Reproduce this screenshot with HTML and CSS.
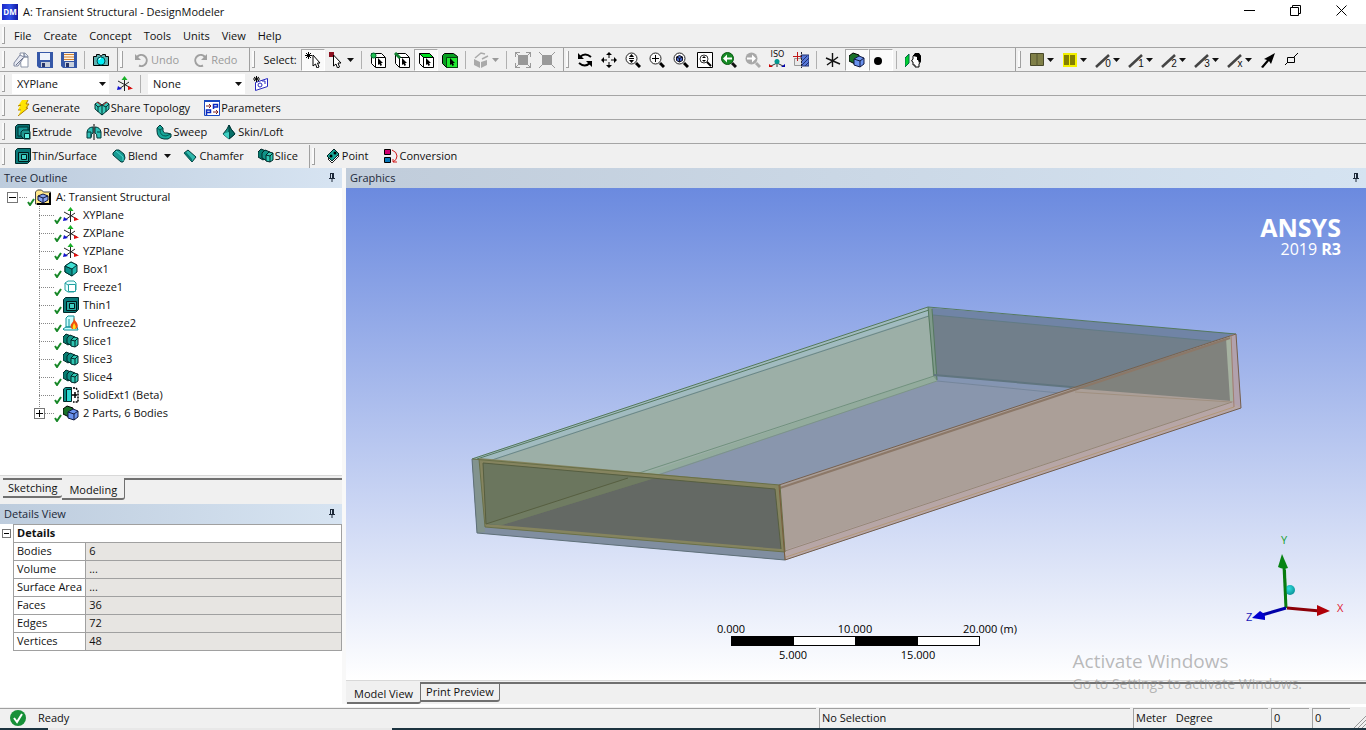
FILE: index.html
```html
<!DOCTYPE html>
<html lang="en">
<head>
<meta charset="utf-8">
<title>A: Transient Structural - DesignModeler</title>
<link rel="stylesheet" href="styles.css">
</head>
<body>
<svg class="defs" aria-hidden="true">
  <defs>
    <radialGradient id="ball" cx=".4" cy=".35" r=".7"><stop offset="0" stop-color="#2fe0e0"/><stop offset="1" stop-color="#0a8f95"/></radialGradient>
  </defs>
  <symbol id="sheet" viewBox="0 0 16 16"><path d="M7 1h5l3 3v11H8z" fill="#fff" stroke="#8d96a8"/><path d="M11 1v4h4" fill="#cfd8e8" stroke="#5d6880"/><path d="M1 11l6-8 4 2-6 9H1z" fill="#e6e9f2" stroke="#8088a0"/><path d="M3 13l7-7" stroke="#687088"/></symbol>
  <symbol id="disk" viewBox="0 0 16 16"><path d="M0 0h16v16H2l-2-2z" fill="#3658a8"/><path d="M3 1h10v7H3z" fill="#eef3fb"/><path d="M4 10h9v5H4z" fill="#c8d0dc"/><path d="M5 11h3v4H5z" fill="#26356b"/></symbol>
  <symbol id="disk-text" viewBox="0 0 16 16"><path d="M0 0h16v16H2l-2-2z" fill="#3658a8"/><path d="M3 1h10v8H3z" fill="#fff4e4"/><path d="M3 2.500h10M3 5h10M3 7.500h10" stroke="#d08030"/><path d="M4 10h9v5H4z" fill="#c8d0dc"/><path d="M5 11h3v4H5z" fill="#26356b"/></symbol>
  <symbol id="camera" viewBox="0 0 16 16"><path d="M.5 4.500h3v-2h3l1.500 2 1.500-2h3v2h3v9H.5z" fill="#60b0b0" stroke="#000"/><circle cx="8" cy="9" r="4" fill="#00f0f8" stroke="#005050"/><path d="M6 8a2 2 0 0 1 2-2" stroke="#fff" fill="none"/></symbol>
  <symbol id="undo" viewBox="0 0 16 16"><path d="M4 5a5.500 5.500 0 1 1 2 8.500" fill="none" stroke="#a0a0a0" stroke-width="2"/><path d="M2 2v6h6z" fill="#a0a0a0"/></symbol>
  <symbol id="redo" viewBox="0 0 16 16"><path d="M12 5a5.500 5.500 0 1 0-2 8.500" fill="none" stroke="#a0a0a0" stroke-width="2"/><path d="M14 2v6H8z" fill="#a0a0a0"/></symbol>
  <symbol id="pick" viewBox="0 0 16 16"><path d="M3.500 0v7M0 3.500h7M1 1l5 5M6 1L1 6" stroke="#000"/><path d="M8 3v11l2.500-2 1.500 4 2-1-1.500-4H15z" fill="#fff" stroke="#000"/></symbol>
  <symbol id="pick-mode" viewBox="0 0 16 16"><path d="M0 0h5v5H0z" fill="#8c1020"/><path d="M4.500 3v11l2.500-2 1.500 4 2-1-1.500-4H12z" fill="#fff" stroke="#000"/></symbol>
  <symbol id="cursor" viewBox="0 0 16 16"><path d="M8 6v7l1.500-1 1 2 1.500-1-1-2h2z" fill="#000"/></symbol>
  <symbol id="sel-point" viewBox="0 0 16 16"><path d="M1.500 1.500h10l4 4v10h-10l-4-4z" fill="#fff" stroke="#000"/><path d="M5.500 15V5.500H15" fill="none" stroke="#000"/><circle cx="3.500" cy="3.500" r="2.500" fill="#20c050" stroke="#063"/><use href="#cursor"/></symbol>
  <symbol id="sel-edge" viewBox="0 0 16 16"><path d="M1.500 1.500h10l4 4v10h-10l-4-4z" fill="#fff" stroke="#000"/><path d="M5.500 15V5.500H15" fill="none" stroke="#000"/><path d="M1 1l5 5" stroke="#108030" stroke-width="3"/><use href="#cursor"/></symbol>
  <symbol id="sel-face" viewBox="0 0 16 16"><path d="M1.500 1.500h10l4 4v10h-10l-4-4z" fill="#fff" stroke="#000"/><path d="M1.500 1.500h10l4 4h-10z" fill="#00e020" stroke="#000"/><path d="M5.500 5v10" stroke="#000"/><use href="#cursor"/></symbol>
  <symbol id="sel-body" viewBox="0 0 16 16"><path d="M.5 3.500l2-2h9l4 3v11h-11l-4-4z" fill="#08a020" stroke="#000"/><path d="M4.500 5.500h11v10h-11z" fill="#20e830" stroke="#064010"/><use href="#cursor"/></symbol>
  <symbol id="box-off" viewBox="0 0 16 16"><path d="M0 7l6 3v6l-6-3zM7 10l6-2v5l-6 3z" fill="#aaa"/><path d="M1 6l6-5 4 1M8 7l6-3" fill="none" stroke="#aaa" stroke-width="1.500"/></symbol>
  <symbol id="fit-off" viewBox="0 0 16 16"><path d="M3 3h10v10H3z" fill="#999"/><path d="M.5 5V.5H5M11 .5h4.500V5M15.500 11v4.500H11M5 15.500H.5V11M0 0l3 3M16 0l-3 3M0 16l3-3M16 16l-3-3" fill="none" stroke="#999"/></symbol>
  <symbol id="shrink-off" viewBox="0 0 16 16"><path d="M3 3h10v10H3z" fill="#999"/><path d="M0 0l4 4M16 0l-4 4M0 16l4-4M16 16l-4-4" stroke="#999"/></symbol>
  <symbol id="rotate" viewBox="0 0 16 16"><path d="M3 5q5-5 11 0M13 11q-5 5-11 0" fill="none" stroke="#000" stroke-width="2"/><path d="M1 1v6h6zM15 15V9H9z"/></symbol>
  <symbol id="pan" viewBox="0 0 16 16"><path d="M8 2v4M8 10v4M2 8h4M10 8h4" stroke="#000"/><path d="M8 0l3 3H5zM8 16l3-3H5zM0 8l3-3v6zM16 8l-3-3v6z"/></symbol>
  <symbol id="lens" viewBox="0 0 16 16"><circle cx="6.500" cy="6.500" r="5.500" fill="#fafafa" stroke="#222"/><path d="M11 11l4 4" stroke="#000" stroke-width="3"/></symbol>
  <symbol id="zoom" viewBox="0 0 16 16"><use href="#lens"/><path d="M6.500 2L9 5H4zM6.500 11L9 8H4zM4 6h5v1H4z"/></symbol>
  <symbol id="zoom-in" viewBox="0 0 16 16"><use href="#lens"/><path d="M3 6.500h7M6.500 3v7" stroke="#000"/></symbol>
  <symbol id="zoom-fit" viewBox="0 0 16 16"><use href="#lens"/><path d="M3.500 5l3-1.500 3 1.500v3.500l-3 1.500-3-1.500z" fill="#4868c8" stroke="#112"/><path d="M3.500 5l3 1.500 3-1.500M6.500 6.500V10" stroke="#112" fill="none"/></symbol>
  <symbol id="zoom-box" viewBox="0 0 16 16"><path d="M.5.5h15v15H.5z" fill="#fff" stroke="#000"/><circle cx="7" cy="7" r="4" fill="#fff" stroke="#333"/><path d="M10 10l4 4" stroke="#000" stroke-width="2"/><path d="M7 4l2 2H5zM7 10l2-2H5z"/></symbol>
  <symbol id="zoom-prev" viewBox="0 0 16 16"><path d="M11 11l4 4" stroke="#111" stroke-width="3"/><circle cx="6.500" cy="6.500" r="6" fill="#168a25" stroke="#07580f"/><path d="M2 6.500l4-4v3h5v2H6v3z" fill="#fff"/></symbol>
  <symbol id="zoom-next" viewBox="0 0 16 16"><path d="M11 11l4 4" stroke="#aaa" stroke-width="3"/><circle cx="6.500" cy="6.500" r="6" fill="#a8a8a8"/><path d="M11 6.500l-4-4v3H2v2h5v3z" fill="#fff"/></symbol>
  <symbol id="iso-axes" viewBox="0 0 16 9"><path d="M8 2v6M8 4l-6 3M8 4l6 3" stroke="#333"/><path d="M0 8V5l4 3z" fill="#c00"/><path d="M16 8V5l-4 3z" fill="#00a"/><circle cx="8" cy="2.500" r="2.500" fill="#009a90"/></symbol>
  <symbol id="section" viewBox="0 0 16 16"><path d="M8 3h8v11H8z" fill="#5878d8" stroke="#203070"/><path d="M8 10l6-6M8 14l8-8M12 14l4-4" stroke="#203070"/><path d="M1.500 6.500h7v7h-7z" fill="#e8e8e8" stroke="#999"/><path d="M4.500 0v9M0 4.500h9" stroke="#c01818"/><path d="M8.500 0v16" stroke="#223" stroke-dasharray="2 1"/></symbol>
  <symbol id="axes-dark" viewBox="0 0 16 16"><path d="M7.500 1v14M1 6l14 6M2 13L13 5" stroke="#111" stroke-width="1.400"/></symbol>
  <symbol id="bodies" viewBox="0 0 16 16"><path d="M0 4l4-3 6 2v7l-4 2-6-3z" fill="#187028" stroke="#000"/><path d="M5 7l5-3 5 2v6l-4 3-6-2z" fill="#6a92ee" stroke="#101840"/><path d="M5 7l6 2 4-3M11 9v6" fill="none" stroke="#101840"/></symbol>
  <symbol id="dot" viewBox="0 0 16 16"><circle cx="5" cy="9" r="4"/></symbol>
  <symbol id="look-at" viewBox="0 0 16 16"><path d="M0 6l4-4v9l-4 4z" fill="#00d030" stroke="#064"/><path d="M8 4l2-2h4l2 3v4l-2 3v3h-4v-2H8v-3L6.500 9 8 7z" fill="#fff" stroke="#000"/><path d="M8 4l2-3h4l2 3v5l-2 2-1-3h-1V5z"/></symbol>
  <symbol id="face-color" viewBox="0 0 16 16"><path d="M1.500 1.500h13v12h-13z" fill="#808048" stroke="#48482a"/><path d="M8 2v12" stroke="#55552e"/></symbol>
  <symbol id="face-edge" viewBox="0 0 16 16"><path d="M1 1h14v14H1z" fill="#f4f000"/><path d="M2 3h5v10H2zM8 3h5v10H8z" fill="#858000"/></symbol>
  <symbol id="edge" viewBox="0 0 16 16"><path d="M1 15L14 3" stroke="#444" stroke-width="2.500"/></symbol>
  <symbol id="dart" viewBox="0 0 16 16"><path d="M1 15l6-7-3-1L15 1l-4 11-2-3-6 7z"/></symbol>
  <symbol id="node" viewBox="0 0 16 16"><path d="M3.500 5.500h7v5h-7zM10 5l4-4M1 13l3-3" fill="none" stroke="#000"/></symbol>
  <symbol id="axes" viewBox="0 0 16 16"><path d="M7.500 3v12M1 5l13 7M2 13L12 6" stroke="#222"/><path d="M7.500 0l3 4h-6z" fill="#18b028"/><path d="M16 12.500l-5-2.500v4z" fill="#e01010"/><path d="M0 14l1-4 4 3z" fill="#1010d0"/></symbol>
  <symbol id="new-plane" viewBox="0 0 16 16"><path d="M2.500 6.500l12-4v8l-12 4z" fill="#fff" stroke="#2828c0"/><circle cx="7" cy="9" r="2" fill="none" stroke="#2828c0"/><path d="M9 5h3v3" fill="none" stroke="#2828c0"/><path d="M3.500 0v6M0 3h7M1 1l5 4M6 1L1 5" stroke="#000"/></symbol>
  <symbol id="bolt" viewBox="0 0 16 16"><path d="M7 0h6l-2 4h3l-3 4h2L3 16l3-6H3l2-4H3z" fill="#ffe400"/><path d="M13 0l-2 4h3l-3 4h2L3 16M3 6l3-1M3 10h3" fill="none" stroke="#b08000"/></symbol>
  <symbol id="share" viewBox="0 0 16 16"><path d="M1 4l3-2 4 3 4-3 3 2v5l-7 6-7-6z" fill="#38c8b8" stroke="#033"/><path d="M1 4l3 3 4-2 4 2 3-3M4 7v5M12 7v5M8 5v10" fill="none" stroke="#033"/><path d="M7 5L3 2M9 5l4-3" stroke="#c02020"/></symbol>
  <symbol id="params" viewBox="0 0 16 16"><path d="M.5.500h15v15H.5z" fill="#fff" stroke="#1848c0"/><path d="M0 0h16v2H0z" fill="#1848c0"/><path d="M9.500 9V4.500h4v2.500h-4M2.500 15v-5h4v2.500h-4" fill="none" stroke="#0828c0" stroke-width="1.500"/><path d="M2 6h5M5 4l2 2-2 2M9 12h5M12 10l2 2-2 2" fill="none" stroke="#802020"/></symbol>
  <symbol id="extrude" viewBox="0 0 16 16"><path d="M.5 2.500l2-2h12v11l-3 3H.5z" fill="#087070" stroke="#002828"/><path d="M3 3h10v9H3z" fill="#189898" stroke="#003030"/><path d="M6 8l2-2h6l1 2v7H9l-3-3z" fill="#209890" stroke="#003030"/><path d="M9.500 9.500h5v5h-5z" fill="#60f0e0" stroke="#003030"/></symbol>
  <symbol id="revolve" viewBox="0 0 16 16"><path d="M1 14V8q1-5 6-5v6q-2 0-2 5zM9 3q5 0 6 5v6h-4q0-5-2-5z" fill="#30c0b8" stroke="#003838"/><path d="M1 8h4v5M15 8h-4" stroke="#003838" fill="none"/><path d="M8 0v16" stroke="#000"/></symbol>
  <symbol id="sweep" viewBox="0 0 16 16"><path d="M1 4l3-3 3 3v3q1 3 4 2l4 1v3l-3 2H8Q1 14 1 7z" fill="#18a89c" stroke="#003838"/><path d="M1 4l3 2 3-2M4 6q0 6 6 6l5-2" fill="none" stroke="#045850"/></symbol>
  <symbol id="loft" viewBox="0 0 16 16"><path d="M8 1l2 4 4 5-6 5-6-5 4-5z" fill="#18988c" stroke="#003838"/><path d="M8 1v14l6-5-4-5z" fill="#087068" stroke="#003838"/><path d="M2 10l6-2v7z" fill="#40d0c4"/></symbol>
  <symbol id="thin" viewBox="0 0 16 16"><path d="M.5 2.500l2-2h13v12l-3 3H.5z" fill="#087878" stroke="#002828"/><path d="M3.500 4.500h10v9h-10z" fill="#28a8a0" stroke="#001818"/><path d="M6.500 6.500h5v5h-5z" fill="#40d0c4" stroke="#001818"/></symbol>
  <symbol id="blend" viewBox="0 0 16 16"><path d="M2 5l3-3h3l5 4 1 4-2 4h-2L2 7z" fill="#189c94" stroke="#003838"/><path d="M5 3l7 6v4" fill="none" stroke="#50d8d0"/></symbol>
  <symbol id="chamfer" viewBox="0 0 16 16"><path d="M2 5l4-3 8 7-4 5z" fill="#30b8ac" stroke="#003838"/><path d="M2 5l8 9v-3L4 4z" fill="#087870"/></symbol>
  <symbol id="slice" viewBox="0 0 16 16"><path d="M0 4l3-3 5 2v7l-3 2-5-3z" fill="#067c70" stroke="#002828"/><path d="M4 5l3-3 5 2v7l-3 2-5-3z" fill="#109488" stroke="#002828"/><path d="M8 7l3-3 4 1v7l-3 2-4-1z" fill="#30c8b4" stroke="#002828"/><path d="M8 7l4 1 3-3M12 8v6" fill="none" stroke="#002828"/></symbol>
  <symbol id="point" viewBox="0 0 16 16"><path d="M3 11l8-7 3 4-7 7z" fill="#fff" stroke="#222"/><path d="M2 8l7-7 5 5-7 7z" fill="#18a898" stroke="#022"/><circle cx="6" cy="8" r="1.500"/><circle cx="10" cy="5" r="1.500"/><path d="M4 12l2 2" stroke="#222"/></symbol>
  <symbol id="convert" viewBox="0 0 16 16"><path d="M1.500 1.500h6v5h-6z" fill="#d00070" stroke="#000"/><path d="M1.500 9.500h6v5h-6z" fill="#0878b8" stroke="#000"/><path d="M9 2q5 2 5 6t-4 6M10 11v3h4" fill="none" stroke="#d01818"/></symbol>
  <symbol id="project" viewBox="0 0 16 16"><path d="M.5 3l2-2h4l2 2h7v12H.5z" fill="#ffe78a" stroke="#444"/><path d="M15 4v11H2" fill="none" stroke="#000" stroke-width="2"/><path d="M3 7l5-2 5 2v4l-5 3-5-3z" fill="#88a4f0" stroke="#101840"/><path d="M3 7l5 2 5-2M8 9v5" fill="none" stroke="#101840"/></symbol>
  <symbol id="box" viewBox="0 0 16 16"><path d="M2 5l6-4 6 3v7l-5 4-7-4z" fill="#20b8b0" stroke="#003030"/><path d="M2 5l7 3v7l-7-4z" fill="#089088" stroke="#003030"/><path d="M2 5l6-4 6 3-5 4z" fill="#40e0d4" stroke="#003030"/></symbol>
  <symbol id="freeze" viewBox="0 0 16 16"><path d="M2 4l3-2h6l2 2v7l-2 2H5l-3-2z" fill="#e8ffff" stroke="#20a0a0"/><path d="M5.500 5.500h7v7h-7zM2 4l3 2" fill="#fff" stroke="#20a0a0"/></symbol>
  <symbol id="unfreeze" viewBox="0 0 16 16"><path d="M3 3l2-2h6v11H3zM0 14l3-2h11l1 3H1z" fill="#c8ffff" stroke="#109098"/><path d="M6 4v8" stroke="#109098"/><path d="M11 2q0 3 3 6 2 4-1 6H9q-3-3 0-6 2-2 2-6z" fill="#f05010"/><path d="M11 8q3 4 1 6h-2q-1-2 1-6z" fill="#ffe020"/></symbol>
  <symbol id="solid-ext" viewBox="0 0 16 16"><path d="M.5 2l2-1.500h6v12l-2 2h-6z" fill="#089088" stroke="#002828"/><path d="M3.500 2.500h5v12h-5z" fill="#30d8d0" stroke="#002828"/><path d="M10 1h3l2 3v11h-5" fill="none" stroke="#000" stroke-width="1.500" stroke-dasharray="2 1"/><path d="M9 8h5M12 5v6" stroke="#000" stroke-width="1.500"/></symbol>
  <symbol id="tick" viewBox="0 0 8 8"><path d="M1 4l2 3 4-6" fill="none" stroke="#188828" stroke-width="2"/></symbol>
  <symbol id="pin" viewBox="0 0 8 10"><path d="M2.500 0v5M1 5.500h6M4 6v3M2 .5h4" stroke="#1c2838" fill="none"/><path d="M4 0h2v5H4z" fill="#1c2838"/></symbol>
  <symbol id="arrow" viewBox="0 0 7 4"><path d="M0 0h7L3.500 4z" fill="currentColor"/></symbol>
</svg>

<header class="titlebar">
  <span class="app-icon">DM</span>
  <h1 class="title">A: Transient Structural - DesignModeler</h1>
  <div class="window-buttons">
    <button aria-label="Minimize"><svg width="11" height="11"><path d="M0 5.500h11" stroke="#000"/></svg></button>
    <button aria-label="Restore"><svg width="11" height="11"><path d="M.5 2.500h8v8h-8zM2.500 2.500v-2h8v8h-2" fill="none" stroke="#000"/></svg></button>
    <button aria-label="Close"><svg width="11" height="11"><path d="M.5.5l10 10M10.500.5l-10 10" stroke="#000"/></svg></button>
  </div>
</header>

<nav class="row menu">
  <i class="grip"></i>
  <button>File</button><button>Create</button><button>Concept</button><button>Tools</button><button>Units</button><button>View</button><button>Help</button>
</nav>

<div class="row">
  <div class="band">
    <i class="grip"></i>
    <button class="tool" aria-label="New"><svg><use href="#sheet"/></svg></button>
    <button class="tool" aria-label="Save"><svg><use href="#disk"/></svg></button>
    <button class="tool" aria-label="Export"><svg><use href="#disk-text"/></svg></button>
    <i class="sep"></i>
    <button class="tool" aria-label="Capture"><svg><use href="#camera"/></svg></button>
  </div>
  <div class="band history">
    <i class="grip"></i>
    <button class="labelled" disabled><svg><use href="#undo"/></svg>Undo</button>
    <button class="labelled" disabled><svg><use href="#redo"/></svg>Redo</button>
  </div>
  <div class="band">
    <i class="grip"></i>
    <span class="select-label">Select:</span>
    <button class="tool pressed" aria-label="New selection"><svg><use href="#pick"/></svg></button>
    <button class="tool split" aria-label="Select mode"><svg><use href="#pick-mode"/></svg><svg class="arrow"><use href="#arrow"/></svg></button>
    <i class="sep"></i>
    <button class="tool" aria-label="Points"><svg><use href="#sel-point"/></svg></button>
    <button class="tool" aria-label="Edges"><svg><use href="#sel-edge"/></svg></button>
    <button class="tool pressed" aria-label="Faces"><svg><use href="#sel-face"/></svg></button>
    <button class="tool" aria-label="Bodies"><svg><use href="#sel-body"/></svg></button>
    <i class="sep"></i>
    <button class="tool split" disabled aria-label="Extend selection"><svg><use href="#box-off"/></svg><svg class="arrow"><use href="#arrow"/></svg></button>
    <i class="sep"></i>
    <button class="tool" disabled aria-label="Expand faces"><svg><use href="#fit-off"/></svg></button>
    <button class="tool" disabled aria-label="Shrink faces"><svg><use href="#shrink-off"/></svg></button>
  </div>
  <div class="band grow">
    <i class="grip"></i>
    <button class="tool" aria-label="Rotate"><svg><use href="#rotate"/></svg></button>
    <button class="tool" aria-label="Pan"><svg><use href="#pan"/></svg></button>
    <button class="tool" aria-label="Zoom"><svg><use href="#zoom"/></svg></button>
    <button class="tool" aria-label="Box zoom"><svg><use href="#zoom-in"/></svg></button>
    <button class="tool" aria-label="Zoom to fit"><svg><use href="#zoom-fit"/></svg></button>
    <button class="tool" aria-label="Magnifier"><svg><use href="#zoom-box"/></svg></button>
    <button class="tool" aria-label="Previous view"><svg><use href="#zoom-prev"/></svg></button>
    <button class="tool" disabled aria-label="Next view"><svg><use href="#zoom-next"/></svg></button>
    <button class="tool iso">ISO<svg><use href="#iso-axes"/></svg></button>
    <button class="tool" aria-label="Section plane"><svg><use href="#section"/></svg></button>
    <i class="sep"></i>
    <button class="tool" aria-label="Display plane"><svg><use href="#axes-dark"/></svg></button>
    <button class="tool pressed" aria-label="Display model"><svg><use href="#bodies"/></svg></button>
    <button class="tool pressed" aria-label="Display points"><svg><use href="#dot"/></svg></button>
    <i class="sep"></i>
    <button class="tool" aria-label="Look at"><svg><use href="#look-at"/></svg></button>
  </div>
  <div class="band edges">
    <i class="grip"></i>
    <button class="tool split" aria-label="Face coloring"><svg><use href="#face-color"/></svg><svg class="arrow"><use href="#arrow"/></svg></button>
    <button class="tool split" aria-label="Edge coloring"><svg><use href="#face-edge"/></svg><svg class="arrow"><use href="#arrow"/></svg></button>
    <button class="tool split"><svg><use href="#edge"/></svg><b class="digit">0</b><svg class="arrow"><use href="#arrow"/></svg></button>
    <button class="tool split"><svg><use href="#edge"/></svg><b class="digit">1</b><svg class="arrow"><use href="#arrow"/></svg></button>
    <button class="tool split"><svg><use href="#edge"/></svg><b class="digit">2</b><svg class="arrow"><use href="#arrow"/></svg></button>
    <button class="tool split"><svg><use href="#edge"/></svg><b class="digit">3</b><svg class="arrow"><use href="#arrow"/></svg></button>
    <button class="tool split"><svg><use href="#edge"/></svg><b class="digit">x</b><svg class="arrow"><use href="#arrow"/></svg></button>
    <button class="tool" aria-label="Edge direction"><svg><use href="#dart"/></svg></button>
    <button class="tool" aria-label="Display vertices"><svg><use href="#node"/></svg></button>
  </div>
</div>

<div class="row planes">
  <i class="grip"></i>
  <label class="combo"><select aria-label="Active plane"><option>XYPlane</option></select><svg class="arrow"><use href="#arrow"/></svg></label>
  <button class="tool" aria-label="New plane"><svg><use href="#axes"/></svg></button>
  <i class="sep"></i>
  <label class="combo"><select aria-label="Active sketch"><option>None</option></select><svg class="arrow"><use href="#arrow"/></svg></label>
  <button class="tool" aria-label="New sketch"><svg><use href="#new-plane"/></svg></button>
</div>

<div class="row">
  <i class="grip"></i>
  <button class="labelled"><svg><use href="#bolt"/></svg>Generate</button>
  <button class="labelled"><svg><use href="#share"/></svg>Share Topology</button>
  <button class="labelled"><svg><use href="#params"/></svg>Parameters</button>
</div>

<div class="row">
  <i class="grip"></i>
  <button class="labelled"><svg><use href="#extrude"/></svg>Extrude</button>
  <button class="labelled"><svg><use href="#revolve"/></svg>Revolve</button>
  <button class="labelled"><svg><use href="#sweep"/></svg>Sweep</button>
  <button class="labelled"><svg><use href="#loft"/></svg>Skin/Loft</button>
</div>

<div class="row last">
  <div class="band">
    <i class="grip"></i>
    <button class="labelled"><svg><use href="#thin"/></svg>Thin/Surface</button>
    <button class="labelled menu-button"><svg><use href="#blend"/></svg>Blend<svg class="arrow"><use href="#arrow"/></svg></button>
    <button class="labelled"><svg><use href="#chamfer"/></svg>Chamfer</button>
    <button class="labelled"><svg><use href="#slice"/></svg>Slice</button>
  </div>
  <div class="band open">
    <i class="grip"></i>
    <button class="labelled"><svg><use href="#point"/></svg>Point</button>
    <button class="labelled"><svg><use href="#convert"/></svg>Conversion</button>
  </div>
</div>

<main class="work">
  <aside class="side">
    <h2 class="panel-head">Tree Outline<svg class="pin"><use href="#pin"/></svg></h2>
    <div class="tree">
      <div class="node root"><button class="toggle" aria-label="Collapse"><svg viewBox="0 0 9 9"><path d="M1 4.500h7" stroke="#000"/></svg></button><i class="stub"></i><svg class="tick"><use href="#tick"/></svg><svg class="icon"><use href="#project"/></svg><span>A: Transient Structural</span></div>
      <ul class="branch">
        <li class="node"><i class="stub"></i><svg class="tick"><use href="#tick"/></svg><svg class="icon"><use href="#axes"/></svg><span>XYPlane</span></li>
        <li class="node"><i class="stub"></i><svg class="tick"><use href="#tick"/></svg><svg class="icon"><use href="#axes"/></svg><span>ZXPlane</span></li>
        <li class="node"><i class="stub"></i><svg class="tick"><use href="#tick"/></svg><svg class="icon"><use href="#axes"/></svg><span>YZPlane</span></li>
        <li class="node"><i class="stub"></i><svg class="tick"><use href="#tick"/></svg><svg class="icon"><use href="#box"/></svg><span>Box1</span></li>
        <li class="node"><i class="stub"></i><svg class="tick"><use href="#tick"/></svg><svg class="icon"><use href="#freeze"/></svg><span>Freeze1</span></li>
        <li class="node"><i class="stub"></i><svg class="tick"><use href="#tick"/></svg><svg class="icon"><use href="#thin"/></svg><span>Thin1</span></li>
        <li class="node"><i class="stub"></i><svg class="tick"><use href="#tick"/></svg><svg class="icon"><use href="#unfreeze"/></svg><span>Unfreeze2</span></li>
        <li class="node"><i class="stub"></i><svg class="tick"><use href="#tick"/></svg><svg class="icon"><use href="#slice"/></svg><span>Slice1</span></li>
        <li class="node"><i class="stub"></i><svg class="tick"><use href="#tick"/></svg><svg class="icon"><use href="#slice"/></svg><span>Slice3</span></li>
        <li class="node"><i class="stub"></i><svg class="tick"><use href="#tick"/></svg><svg class="icon"><use href="#slice"/></svg><span>Slice4</span></li>
        <li class="node"><i class="stub"></i><svg class="tick"><use href="#tick"/></svg><svg class="icon"><use href="#solid-ext"/></svg><span>SolidExt1 (Beta)</span></li>
        <li class="node parts"><button class="toggle" aria-label="Expand"><svg viewBox="0 0 9 9"><path d="M1 4.500h7M4.500 1v7" stroke="#000"/></svg></button><i class="stub"></i><svg class="tick"><use href="#tick"/></svg><svg class="icon"><use href="#bodies"/></svg><span>2 Parts, 6 Bodies</span></li>
      </ul>
    </div>
    <div class="tabs side-tabs"><button class="tab">Sketching</button><button class="tab active">Modeling</button><i class="tab-line"></i></div>
    <h2 class="panel-head">Details View<svg class="pin"><use href="#pin"/></svg></h2>
    <div class="details">
      <button class="toggle small" aria-label="Collapse details"><svg viewBox="0 0 7 7"><path d="M1 3.500h5" stroke="#000"/></svg></button>
      <table>
        <tr><th colspan="2" class="group">Details</th></tr>
        <tr><th>Bodies</th><td>6</td></tr>
        <tr><th>Volume</th><td>...</td></tr>
        <tr><th>Surface Area</th><td>...</td></tr>
        <tr><th>Faces</th><td>36</td></tr>
        <tr><th>Edges</th><td>72</td></tr>
        <tr><th>Vertices</th><td>48</td></tr>
      </table>
    </div>
  </aside>

  <section class="graphics">
    <h2 class="panel-head flat">Graphics<svg class="pin"><use href="#pin"/></svg></h2>
    <div class="viewport">
      <svg class="scene" viewBox="346 188 1020 492" role="img" aria-label="Model view">
        <g stroke-linejoin="round">
          <path d="M477 532L936 376L1240 408L785 560z" fill="#8996ad"/>
          <path d="M929 308L1236 334L1232 402L934 376z" fill="#717f8b"/>
          <path d="M929 308L1236 334L1211 341L933 315z" fill="#7084a6"/>
          <path d="M934 375L1232 401L1232 405L937 381z" fill="#8495b2"/>
          <path d="M472 459L928 307L937 381L477 533z" fill="#9cafa7"/>
          <path d="M473 458L928 307L929 315L490 460z" fill="#a1bbc0"/>
          <path d="M485 527L934 376L937 381L500 527z" fill="#93ac9d"/>
          <path d="M928 307L932 308L937 381L933 376z" fill="#7f9a8b"/>
          <g fill="none" stroke="#55795f">
            <path d="M472 459L928 307L1236 334"/>
            <path d="M477 459L929 310"/>
            <path d="M492 460L929 316" stroke="#68878a"/>
            <path d="M627 477L934 376" stroke="#71917e"/>
            <path d="M932 309L937 380M928 307L934 376"/>
            <path d="M655 476L937 381" stroke="#7c9488"/>
            <path d="M933 315L1211 341" stroke="#627b85"/>
            <path d="M934 375L1232 401" stroke="#60757f" stroke-width="2"/>
            <path d="M937 381L1100 397" stroke="#75869c"/>
          </g>
          <path d="M779 485L1236 334L1241 408L785 560z" fill="#ab9f98"/>
          <path d="M1070 388L1227 338L1232 401z" fill="#80827d"/>
          <path d="M1226 338L1231 336L1233 401L1230 401z" fill="#a6b2a1"/>
          <path d="M1231 335L1236 334L1241 408L1234 407z" fill="#b1a1ad"/>
          <path d="M785 550L1232 402L1241 408L785 560z" fill="#b7a6a6"/>
          <g fill="none" stroke="#75604f">
            <path d="M779 485L1236 334L1241 408L785 560z"/>
            <path d="M780 488L1230 338" stroke="#8c7868" stroke-width="2"/>
            <path d="M785 551L1232 402" stroke="#958878"/>
            <path d="M786 557L1234 407" stroke="#b39878"/>
            <path d="M1231 335L1234 407" stroke="#a27f71"/>
            <path d="M1075 392L1231 402" stroke="#a09080"/>
          </g>
          <path d="M472 459L482 460L485 527L785 552V560L477 533z" fill="#808ea0"/>
          <path d="M472 459L480 460L485 532L477 533z" fill="#82938e"/>
          <path d="M479 458L780 485L785 552L485 527z" fill="#85845f"/>
          <path d="M483 463L775 489L781 549L486 524z" fill="#646964"/>
          <path d="M483 463L655 478L502 525L486 524z" fill="#6b765e"/>
          <path d="M486 524L628 478L655 478L502 525z" fill="#707c62"/>
          <g fill="none" stroke="#697048">
            <path d="M472 459L780 485L785 552L485 527L479 459"/>
            <path d="M483 463L775 489L781 549M483 463L486 524L628 478" stroke="#575f41"/>
            <path d="M472 459L477 533L785 560" stroke="#5f7079"/>
            <path d="M779 485L785 560" stroke="#795c3b"/>
          </g>
        </g>
        <path d="M1286 608L1284 566" stroke="#087c10" stroke-width="3"/>
        <path d="M1282 554L1288 568Q1283 570 1278 567z" fill="#078414"/>
        <circle cx="1290" cy="590" r="5" fill="url(#ball)"/>
        <path d="M1285 570L1286 606" stroke="#087c10" stroke-width="2"/>
        <path d="M1287 608L1320 611" stroke="#8c0008" stroke-width="3"/>
        <path d="M1330 611L1317 616V605z" fill="#b00008"/>
        <path d="M1286 608L1262 615" stroke="#0000a8" stroke-width="3"/>
        <path d="M1252 618L1260 611Q1266 614 1265 620z" fill="#0000d0"/>
        <g class="axis-names"><text x="1281" y="544" fill="#18a030">Y</text><text x="1337" y="612" fill="#e02030">X</text><text x="1246" y="621" fill="#1818b8">Z</text></g>
        <g shape-rendering="crispEdges"><path d="M731 636h249v10H731z"/><path d="M794 637h61v8h-61zM918 637h61v8h-61z" fill="#fff"/></g>
        <g class="scale-text"><text x="731" y="633">0.000</text><text x="855" y="633">10.000</text><text x="990" y="633">20.000 (m)</text><text x="793" y="659">5.000</text><text x="918" y="659">15.000</text></g>
      </svg>
      <div class="brand"><strong>ANSYS</strong><span>2019 <b>R3</b></span></div>
    </div>
    <div class="tabs view-tabs"><button class="tab active">Model View</button><button class="tab">Print Preview</button><i class="tab-line"></i></div>
    <div class="watermark"><p class="watermark-title">Activate Windows</p><p>Go to Settings to activate Windows.</p></div>
  </section>
</main>

<footer class="status">
  <div class="cell ready"><svg width="16" height="16"><circle cx="8" cy="8" r="8" fill="#179038"/><path d="M4 8l3 4 5-8" fill="none" stroke="#fff" stroke-width="2"/></svg>Ready</div>
  <div class="cell selection">No Selection</div>
  <div class="cell units"><span>Meter</span><span>Degree</span></div>
  <div class="cell number">0</div>
  <div class="cell number">0</div>
  <svg class="resize" width="13" height="13"><path d="M1 13L13 1M5 13l8-8M9 13l4-4" stroke="#999"/></svg>
</footer>
<div class="desk"><i></i></div>
</body>
</html>
```
FILE: styles.css
```css
* { box-sizing: border-box; }
body {
  margin: 0;
  height: 100vh;
  display: flex;
  flex-direction: column;
  overflow: hidden;
  background: #f0f0f0;
  color: #111;
  font: 11px/16px "Open Sans", "Noto Sans", sans-serif;
}
button, select { font: inherit; color: inherit; background: none; border: 0; padding: 0; margin: 0; }
h1, h2, p, ul { margin: 0; padding: 0; font: inherit; }
svg { display: block; flex: none; }
.defs { position: absolute; width: 0; height: 0; }

.titlebar { flex: none; height: 24px; display: flex; align-items: center; background: #fff; padding: 0 2px; }
.app-icon { width: 16px; height: 16px; background: linear-gradient(90deg, #1c28c8, #3050e8 50%, #1018a0); color: #fff; font-size: 8px; font-weight: 700; text-align: center; }
.title { flex: 1; padding-left: 5px; }
.window-buttons { display: flex; align-self: flex-start; }
.window-buttons button { width: 46px; height: 20px; display: grid; place-items: center; }

.row { flex: none; height: 24px; display: flex; align-items: center; border-bottom: 1px solid #a5a5a5; white-space: nowrap; }
.row.last { border-bottom: 0; }
.band { height: 23px; display: flex; align-items: center; padding-right: 4px; border-right: 1px solid #a0a0a0; }
.band.grow { flex: 1; }
.band.edges { flex: 0 0 350px; }
.band.open, .band.edges { border-right: 0; }
.grip { flex: none; width: 3px; height: 17px; margin: 0 4px 0 2px; border-right: 1px solid #a0a0a0; border-bottom: 1px solid #a0a0a0; background: #fafafa; }
.sep { flex: none; width: 1px; height: 18px; margin: 0 4px 0 3px; background: #b0b0b0; }
.menu .grip { margin-right: 1px; }
.menu button { margin-left: 4px; padding: 0 4px; }

.tool { flex: none; width: 24px; height: 22px; display: flex; align-items: center; justify-content: center; }
.tool svg, .labelled svg, .node svg { width: 16px; height: 16px; }
.tool .arrow, .labelled .arrow, .combo .arrow { width: 7px; height: 4px; }
.pressed { background: #fafafa; border: 1px solid #a8a8a8; border-right-color: #fff; border-bottom-color: #fff; }
.split { width: 33px; justify-content: flex-start; padding-left: 4px; gap: 1px; }
.split .arrow { margin-left: 1px; }
button:disabled { color: #9a9a9a; }
.digit { align-self: flex-end; margin: 0 0 1px -7px; width: 6px; font: 10px/12px "Liberation Sans", sans-serif; }
.iso { flex-direction: column; font: 8px/8px "DejaVu Sans", sans-serif; }
.iso svg { width: 16px; height: 9px; }
.select-label { width: 38px; margin-left: 4px; }
.labelled { display: flex; align-items: center; padding: 0 7px; gap: 1px; }
.grip + .labelled { padding-left: 6px; }
.labelled .arrow { margin-left: 6px; }
.menu-button { padding-right: 4px; }
.history .labelled { padding: 0 8px 0 6px; gap: 2px; }

.combo { position: relative; width: 97px; height: 20px; margin: 0 4px 0 3px; background: #fff; }
.combo select { appearance: none; width: 100%; height: 20px; padding-left: 5px; }
.combo .arrow { position: absolute; right: 3px; top: 8px; pointer-events: none; }

.work { flex: 1; min-height: 0; display: grid; grid-template-columns: 342px 1fr; gap: 4px; background: #f8f8f8; }
.side { display: flex; flex-direction: column; min-height: 0; background: #f0f0f0; }
.panel-head { flex: none; height: 20px; padding: 2px 6px 0 4px; display: flex; justify-content: space-between; background: linear-gradient(90deg, #bdccdd, #d7e4f2); color: #1c2838; }
.panel-head.flat { background: linear-gradient(90deg, #c0ccda, #d5e3f1); }
.pin { width: 8px; height: 10px; margin-top: 3px; }

.tree { flex: 1; min-height: 0; background: #fff; }
.node { display: flex; align-items: center; height: 18px; }
.node span { margin-left: 4px; }
.root { padding-left: 7px; }
.root span { margin-left: 5px; }
.toggle { flex: none; width: 11px; height: 11px; border: 1px solid #777; background: #fff; }
.toggle svg { width: 100%; height: 100%; }
.node .toggle svg { width: 9px; height: 9px; }
.stub { flex: none; width: 15px; height: 1px; border-top: 1px dotted #888; }
.root .stub { width: 8px; margin-left: 1px; }
.node .tick { width: 8px; height: 8px; align-self: flex-end; }
.branch { list-style: none; margin-left: 39px; position: relative; }
.branch::before { content: ""; position: absolute; left: 0; top: 0; bottom: 9px; border-left: 1px dotted #888; }
.branch .icon { margin-left: 1px; }
.parts .toggle { margin-left: -5px; position: relative; }
.parts .stub { width: 9px; }

.tabs { flex: none; display: flex; align-items: flex-start; background: #f0f0f0; border-top: 1px solid #d8d8d8; padding-top: 2px; }
.side-tabs { height: 29px; padding-left: 3px; }
.view-tabs { height: 24px; padding-left: 1px; padding-top: 1px; }
.tab { height: 20px; padding: 0 5px; border: solid #707070; border-width: 2px 1px 2px 0; border-radius: 0 0 3px 0; }
.tab.active { height: 22px; padding: 3px 7px 0; border-top: 0; }
.side-tabs .tab:first-child { border-right: 0; }
.tab-line { flex: 1; border-top: 2px solid #707070; }

.details { flex: none; height: 180px; display: flex; align-items: flex-start; background: #fff; }
.toggle.small { width: 9px; height: 9px; margin: 5px 2px; }
.details table { flex: 1; border-collapse: collapse; table-layout: fixed; }
.details th, .details td { height: 18px; padding: 0 3px 2px; border: 1px solid #a0a0a0; line-height: 15px; text-align: left; font-weight: 400; }
.details th { width: 72px; white-space: nowrap; }
.details td { background: #e7e5e2; }
.details .group { width: auto; font-weight: 700; }

.graphics { position: relative; display: flex; flex-direction: column; min-width: 0; min-height: 0; }
.viewport { flex: 1; min-height: 0; position: relative; background: linear-gradient(#6b8adf, #fff); }
.scene { width: 100%; height: 100%; }
.axis-names, .scale-text { font: 11px "Open Sans", sans-serif; }
.scale-text { text-anchor: middle; }
.brand { position: absolute; top: 25px; right: 25px; color: #fff; text-align: right; font-size: 16px; line-height: 16px; }
.brand strong { display: block; font: 700 25px/28px "Open Sans", sans-serif; }
.brand span { display: block; }
.watermark { position: absolute; right: 64px; bottom: 10px; color: rgba(140, 140, 140, .6); font-size: 14px; line-height: 20px; }
.watermark-title { font-size: 19px; line-height: 26px; }

.status { flex: none; height: 24px; padding-top: 4px; display: flex; gap: 3px; background: linear-gradient(#fff 3px, #f0f0f0 3px); }
.cell { border-top: 1px solid #a0a0a0; border-left: 1px solid #a0a0a0; padding-left: 2px; line-height: 17px; }
.ready { flex: 1; display: flex; align-items: flex-start; gap: 12px; padding: 1px 0 0 10px; line-height: 16px; border-left: 0; }
.selection { width: 311px; }
.units { width: 135px; display: flex; gap: 9px; }
.number { width: 38px; }
.resize { align-self: flex-end; }
.desk { flex: none; height: 2px; background: #1c3340; padding-left: 48px; }
.desk i { display: block; width: 344px; height: 2px; background: #e8e8e8; }
```
